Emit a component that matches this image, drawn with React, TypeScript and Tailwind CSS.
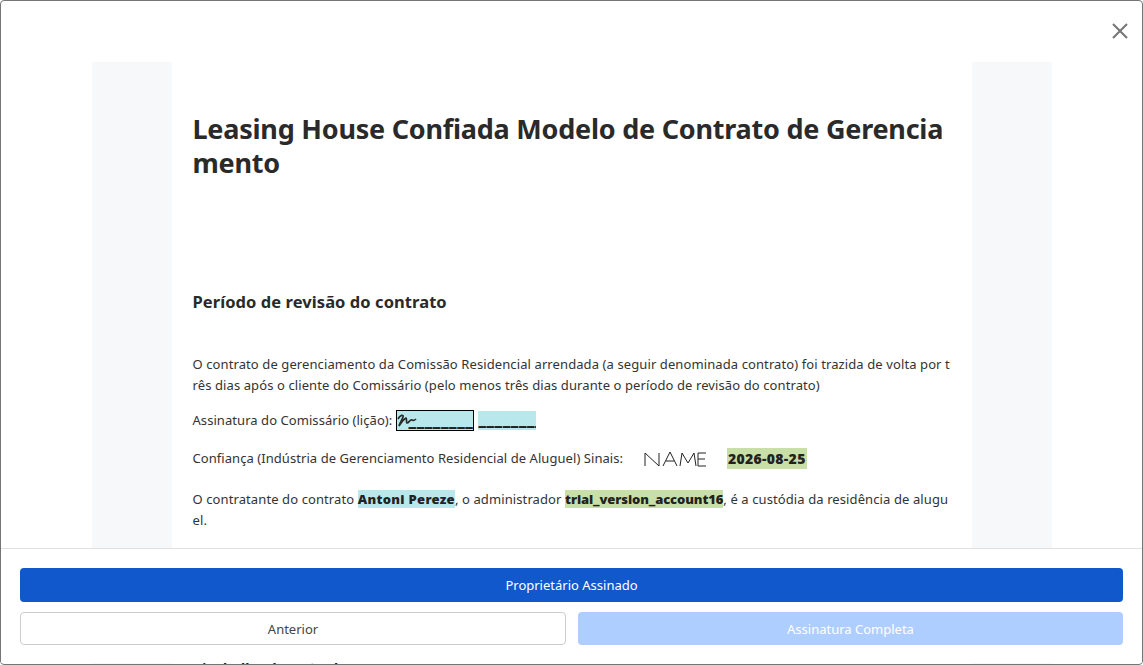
import React from "react";

const page = "[font-family:'Noto_Sans','Open_Sans',sans-serif]";

function SignatureScribble() {
  return (
    <svg width="20" height="14" viewBox="0 0 20 14" className="absolute left-0 top-[3px]">
      <path
        d="M1 5 C3 1 7 0 6 3 C5 6 3 9 2 12 C4 9 7 5 9 4 C10 4 9 9 10 9 C12 9 13 5 15 6 C16 7 18 6 19 5"
        fill="none"
        stroke="#2a2a2a"
        strokeWidth="1.7"
      />
    </svg>
  );
}

function NameSignature() {
  return (
    <svg width="64" height="16" viewBox="0 0 64 16" className="ml-[21px] mr-[19px]">
      <path
        d="M1 15 L1 2 L15 15 L15 2 M19 15 L26 1 L33 15 M22 10 L30 10 M36 15 L38 2 L44 12 L50 2 L52 15 M62 2 L54 2 L54 15 L62 15 M54 8 L61 8"
        fill="none"
        stroke="#222"
        strokeWidth="1"
      />
    </svg>
  );
}

function App() {
  return (
    <div className={`${page} h-[665px] w-full overflow-hidden relative bg-white border border-[#757575] rounded-[4px]`}>
      <button className="absolute right-[13px] top-[21px] text-[#757575]">
        <svg width="18" height="18" viewBox="0 0 18 18">
          <path d="M2 2 L16 16 M16 2 L2 16" stroke="#757575" strokeWidth="2" fill="none" />
        </svg>
      </button>

      <div className="mx-auto mt-[61px] w-[960px] h-[640px] bg-[#f7f8fa] px-[80px]">
        <div className="bg-white h-full px-[21px] pt-[50px] text-[13px] leading-[21px] text-[#333]">
          <h1 className="text-[27px] leading-[34px] tracking-[-0.23px] font-bold text-[#2a2a2a] break-all">
            Leasing House Confiada Modelo de Contrato de Gerenciamento
          </h1>
          <h2 className="mt-[110px] text-[16.5px] leading-[24px] tracking-[0.07px] font-bold text-[#2a2a2a]">Período de revisão do contrato</h2>
          <p className="mt-[40px] break-all tracking-[0.1px]">
            O contrato de gerenciamento da Comissão Residencial arrendada (a seguir denominada contrato) foi trazida de volta por três dias após o cliente do Comissário (pelo menos três dias durante o período de revisão do contrato)
          </p>
          <p className="mt-[14px] flex items-center tracking-[0.06px]">
            Assinatura do Comissário (lição):
            <span className="relative ml-[4px] w-[78px] h-[21px] bg-[#b8e8ec] border border-black leading-[18px] text-right text-[15px] text-[#222] font-black overflow-hidden whitespace-nowrap">
              <SignatureScribble />
              <span className="tracking-[0.6px]">________</span>
            </span>
            <span className="ml-[4px] w-[58px] h-[19px] bg-[#b8e8ec] leading-[17px] text-[15px] text-[#222] font-black overflow-hidden whitespace-nowrap tracking-[0.6px]">________</span>
          </p>
          <p className="mt-[17px] flex items-center tracking-[0.06px]">
            Confiança (Indústria de Gerenciamento Residencial de Aluguel) Sinais:
            <NameSignature />
            <span className="bg-[#c8e0a8] px-[1px] text-[14px] tracking-[0.3px] font-black text-[#222]">2026-08-25</span>
          </p>
          <p className="mt-[20px] break-all tracking-[0.1px]">
            O contratante do contrato <span className="bg-[#b8e8ec] font-black tracking-[0.3px] text-[#222]">Antoni Pereze</span>, o administrador <span className="bg-[#c8e0a8] font-black tracking-[-0.1px] text-[#222]">trial_version_account16</span>, é a custódia da residência de aluguel.
          </p>
          <p className="mt-[125px] text-[14px] font-bold tracking-[0.3px] text-[#222]"><span className="text-[#5a7a20]">▪</span> trabalho do imóvel:</p>
        </div>
      </div>

      <div className="absolute left-0 right-0 top-[547px] h-[115px] bg-white border-t border-[#e0e0e0] px-[19px] pt-[19px]">
        <button className="w-full h-[34px] pt-[1px] rounded-[4px] bg-[#1058cc] text-white text-[13px]">Proprietário Assinado</button>
        <div className="mt-[10px] flex gap-[12px]">
          <button className="w-[546px] h-[33px] pt-[2px] rounded-[4px] bg-white border border-[#cccccc] text-[#444] text-[13px]">Anterior</button>
          <button className="flex-1 h-[33px] pt-[2px] rounded-[4px] bg-[#aeceff] text-white text-[13px]">Assinatura Completa</button>
        </div>
      </div>
    </div>
  );
}

export default App;
